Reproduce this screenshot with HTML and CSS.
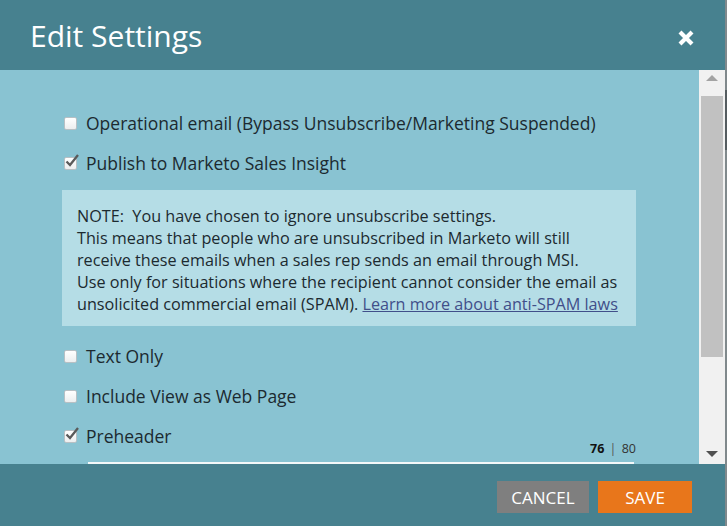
FILE: index.html
```html
<!DOCTYPE html>
<html>
<head>
<meta charset="utf-8">
<link rel="stylesheet" href="styles.css">
</head>
<body>
<div class="dialog">
  <div class="header">
    <div class="title">Edit Settings</div>
    <svg class="close" width="18" height="18" viewBox="0 0 18 18"><path d="M3 3 L15 15 M15 3 L3 15" stroke="#fff" stroke-width="4.2" stroke-linecap="butt"/></svg>
  </div>
  <div class="main">
    <div class="content">
      <div class="inner">
        <label class="row"><span class="cb"></span><span>Operational email (Bypass Unsubscribe/Marketing Suspended)</span></label>
        <label class="row"><span class="cb checked"><svg width="16" height="16" viewBox="0 0 16 16"><path d="M2.5 8.5 L6 12 L14 2" fill="none" stroke="#5a5a5a" stroke-width="2.3"/></svg></span><span>Publish to Marketo Sales Insight</span></label>
        <div class="note">NOTE:&nbsp; You have chosen to ignore unsubscribe settings.<br>This means that people who are unsubscribed in Marketo will still<br>receive these emails when a sales rep sends an email through MSI.<br>Use only for situations where the recipient cannot consider the email as<br>unsolicited commercial email (SPAM). <a href="#" class="link">Learn more about anti-SPAM laws</a></div>
        <label class="row row3"><span class="cb"></span><span>Text Only</span></label>
        <label class="row"><span class="cb"></span><span>Include View as Web Page</span></label>
        <label class="row"><span class="cb checked"><svg width="16" height="16" viewBox="0 0 16 16"><path d="M2.5 8.5 L6 12 L14 2" fill="none" stroke="#5a5a5a" stroke-width="2.3"/></svg></span><span>Preheader</span></label>
        <div class="counter"><b>76</b> <span class="sep">|</span> 80</div>
        <div class="field"></div>
      </div>
    </div>
    <div class="scrollbar">
      <div class="arrow up"></div>
      <div class="thumb"></div>
      <div class="track"></div>
      <div class="arrow down"></div>
    </div>
  </div>
  <div class="footer">
    <button class="btn cancel">CANCEL</button>
    <button class="btn save">SAVE</button>
  </div>
  <div class="edge"><div class="edge-thumb"></div></div>
</div>
</body>
</html>
```

FILE: styles.css
```css
html, body {
  margin: 0;
  padding: 0;
}
body {
  width: 727px;
  height: 526px;
  overflow: hidden;
  font-family: "Open Sans", "DejaVu Sans", sans-serif;
  color: #1c2a30;
}
.dialog {
  position: relative;
  width: 727px;
  height: 526px;
  display: flex;
  flex-direction: column;
  background: #89c3d2;
}
.header {
  height: 70px;
  background: #47818f;
  display: flex;
  align-items: center;
  justify-content: space-between;
  padding: 0 32px 0 30px;
  box-sizing: border-box;
  flex: none;
}
.title {
  color: #fff;
  font-size: 30px;
  line-height: 1;
  margin-top: 1px;
}
.close {
  margin-top: 6px;
}
.main {
  flex: none;
  height: 394px;
  display: flex;
  overflow: hidden;
}
.content {
  flex: 1;
  padding-left: 62px;
  overflow: hidden;
}
.inner {
  width: 574px;
  display: flex;
  flex-direction: column;
  padding-top: 41px;
}
.row {
  display: flex;
  align-items: center;
  height: 24px;
  font-size: 17.5px;
  padding-left: 2px;
  margin-bottom: 16px;
  cursor: pointer;
}
.row3 {
  margin-top: 2px;
}
.cb {
  width: 13px;
  height: 13px;
  box-sizing: border-box;
  border: 1px solid #b8c0c4;
  border-radius: 2px;
  background: linear-gradient(#ffffff, #eceeef);
  margin-right: 9px;
  position: relative;
  flex: none;
}
.cb svg {
  position: absolute;
  left: -1px;
  top: -5px;
}
.note {
  background: #b5dde6;
  padding: 15px 15px 11px 15px;
  font-size: 16.2px;
  line-height: 22px;
  margin-top: -1px;
  margin-bottom: 16px;
}
.link {
  color: #414f8a;
  text-decoration: underline;
}
.counter {
  margin-top: -23px;
  height: 16px;
  line-height: 16px;
  text-align: right;
  font-size: 12.5px;
  color: #333;
}
.counter b {
  color: #111;
}
.sep {
  color: #555;
  margin: 0 2px;
}
.field {
  margin-top: 5px;
  margin-left: 26px;
  margin-right: 2px;
  border-top: 2px solid #f4f8f9;
  height: 20px;
}
.scrollbar {
  width: 26px;
  margin-right: 2px;
  background: #f1f1f1;
  display: flex;
  flex-direction: column;
  align-items: center;
  flex: none;
}
.arrow {
  width: 0;
  height: 0;
  border-left: 6px solid transparent;
  border-right: 6px solid transparent;
  flex: none;
}
.arrow.up {
  margin-top: 5px;
  border-bottom: 6px solid #a3a3a3;
  margin-bottom: 15px;
}
.arrow.down {
  border-top: 6px solid #505050;
  margin-bottom: 7px;
}
.thumb {
  width: 22px;
  height: 261px;
  background: #c1c1c1;
  flex: none;
}
.track {
  flex: 1;
}
.footer {
  flex: none;
  height: 62px;
  background: #47818f;
  display: flex;
  justify-content: flex-end;
  align-items: flex-start;
  padding: 17px 35px 0 0;
  box-sizing: border-box;
  gap: 9px;
}
.btn {
  height: 32px;
  border: none;
  color: #fff;
  font-family: "Open Sans", "DejaVu Sans", sans-serif;
  font-size: 17px;
  padding: 0;
  cursor: pointer;
}
.cancel {
  width: 92px;
  background: #7f7f7f;
}
.save {
  width: 94px;
  background: #e8761b;
}
.edge {
  position: absolute;
  right: 0;
  top: 0;
  width: 2px;
  height: 526px;
  background: #80898c;
}
.edge-thumb {
  margin-top: 90px;
  height: 60px;
  background: #555c60;
}
```
